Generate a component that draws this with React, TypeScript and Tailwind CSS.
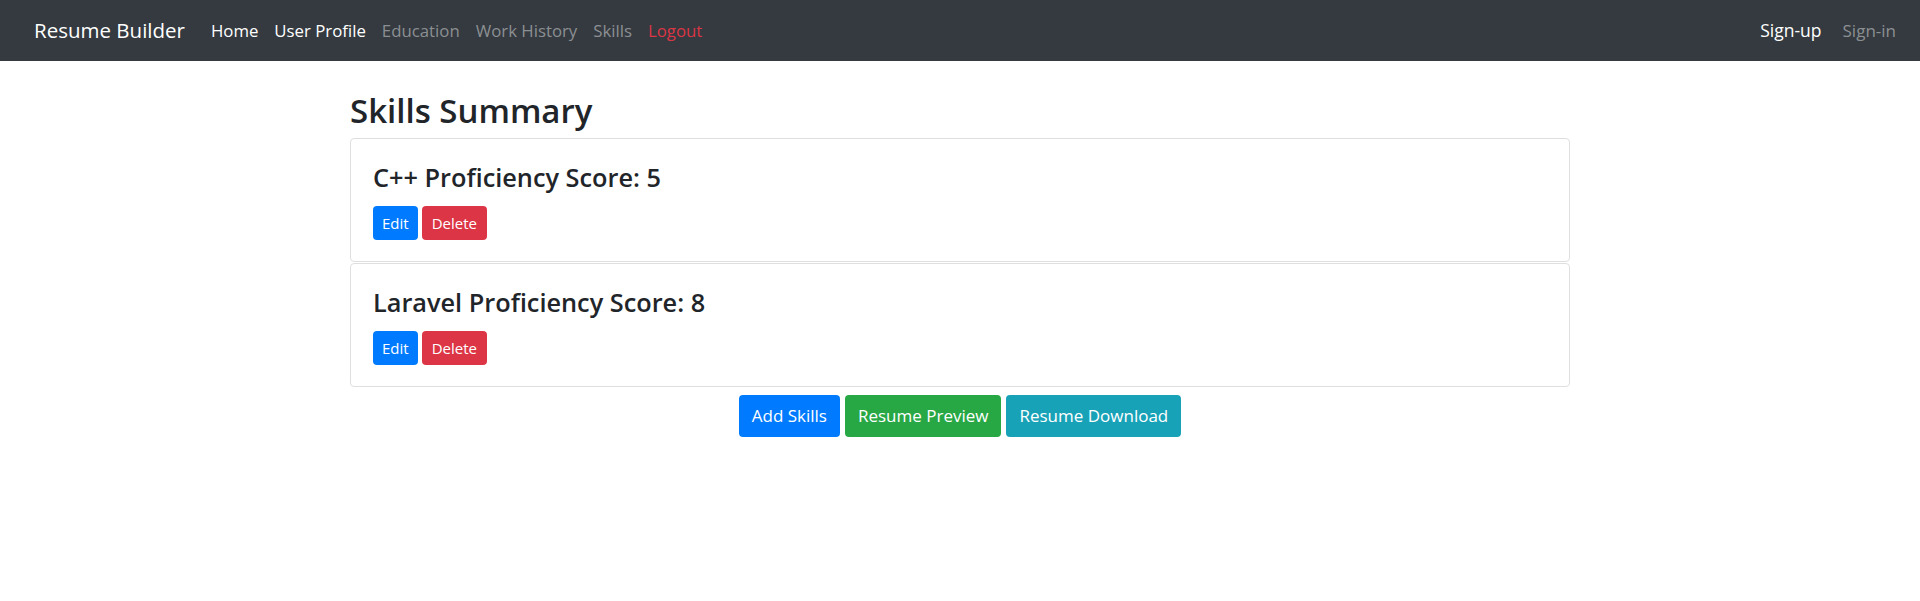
import React from "react";

const font = { fontFamily: '"Open Sans", "Noto Sans", Arial, sans-serif' };

function SkillCard({ title }: { title: string }) {
  return (
    <div className="border border-[#dfdfdf] rounded-[4px] px-[22px] pt-[20px] pb-[21px] bg-white">
      <h4 className="text-[25.3px] leading-[37px] font-semibold text-[#212529] mb-[10px]">{title}</h4>
      <div className="flex gap-[4px]">
        <button className="h-[34px] px-[9px] rounded-[4px] bg-[#007bff] text-white text-[15px]">Edit</button>
        <button className="h-[34px] px-[10px] rounded-[4px] bg-[#dc3545] text-white text-[15px]">Delete</button>
      </div>
    </div>
  );
}

export default function App() {
  return (
    <div className="min-h-[601px] bg-white" style={font}>
      <nav className="h-[61px] bg-[#343a40] flex items-center justify-between pl-[34px] pr-[16px]">
        <div className="flex items-center">
          <span className="text-white text-[20.5px] mr-[18px]">Resume Builder</span>
          <a className="text-white text-[16.8px] px-[8px]">Home</a>
          <a className="text-white text-[16.8px] px-[8px]">User Profile</a>
          <a className="text-[#8c8f92] text-[16.8px] px-[8px]">Education</a>
          <a className="text-[#8c8f92] text-[16.8px] px-[8px]">Work History</a>
          <a className="text-[#8c8f92] text-[16.8px] px-[8px]">Skills</a>
          <a className="text-[#dc3545] text-[16.8px] px-[8px]">Logout</a>
        </div>
        <div className="flex items-center">
          <a className="text-white text-[17.5px] pl-[8px] pr-[13px]">Sign-up</a>
          <a className="text-[#8c8f92] text-[17px] px-[8px]">Sign-in</a>
        </div>
      </nav>
      <main className="w-[1220px] mx-auto pt-[31px]">
        <h2 className="text-[33px] leading-[38px] font-semibold text-[#212529] mb-[8px]">Skills Summary</h2>
        <div className="flex flex-col gap-[1px]">
          <SkillCard title="C++ Proficiency Score: 5" />
          <SkillCard title="Laravel Proficiency Score: 8" />
        </div>
        <div className="flex justify-center gap-[5px] mt-[8px]">
          <button className="h-[42px] px-[13px] rounded-[4px] bg-[#007bff] text-white text-[17px]">Add Skills</button>
          <button className="h-[42px] px-[13px] rounded-[4px] bg-[#28a745] text-white text-[17px]">Resume Preview</button>
          <button className="h-[42px] px-[13px] rounded-[4px] bg-[#17a2b8] text-white text-[17px]">Resume Download</button>
        </div>
      </main>
    </div>
  );
}
